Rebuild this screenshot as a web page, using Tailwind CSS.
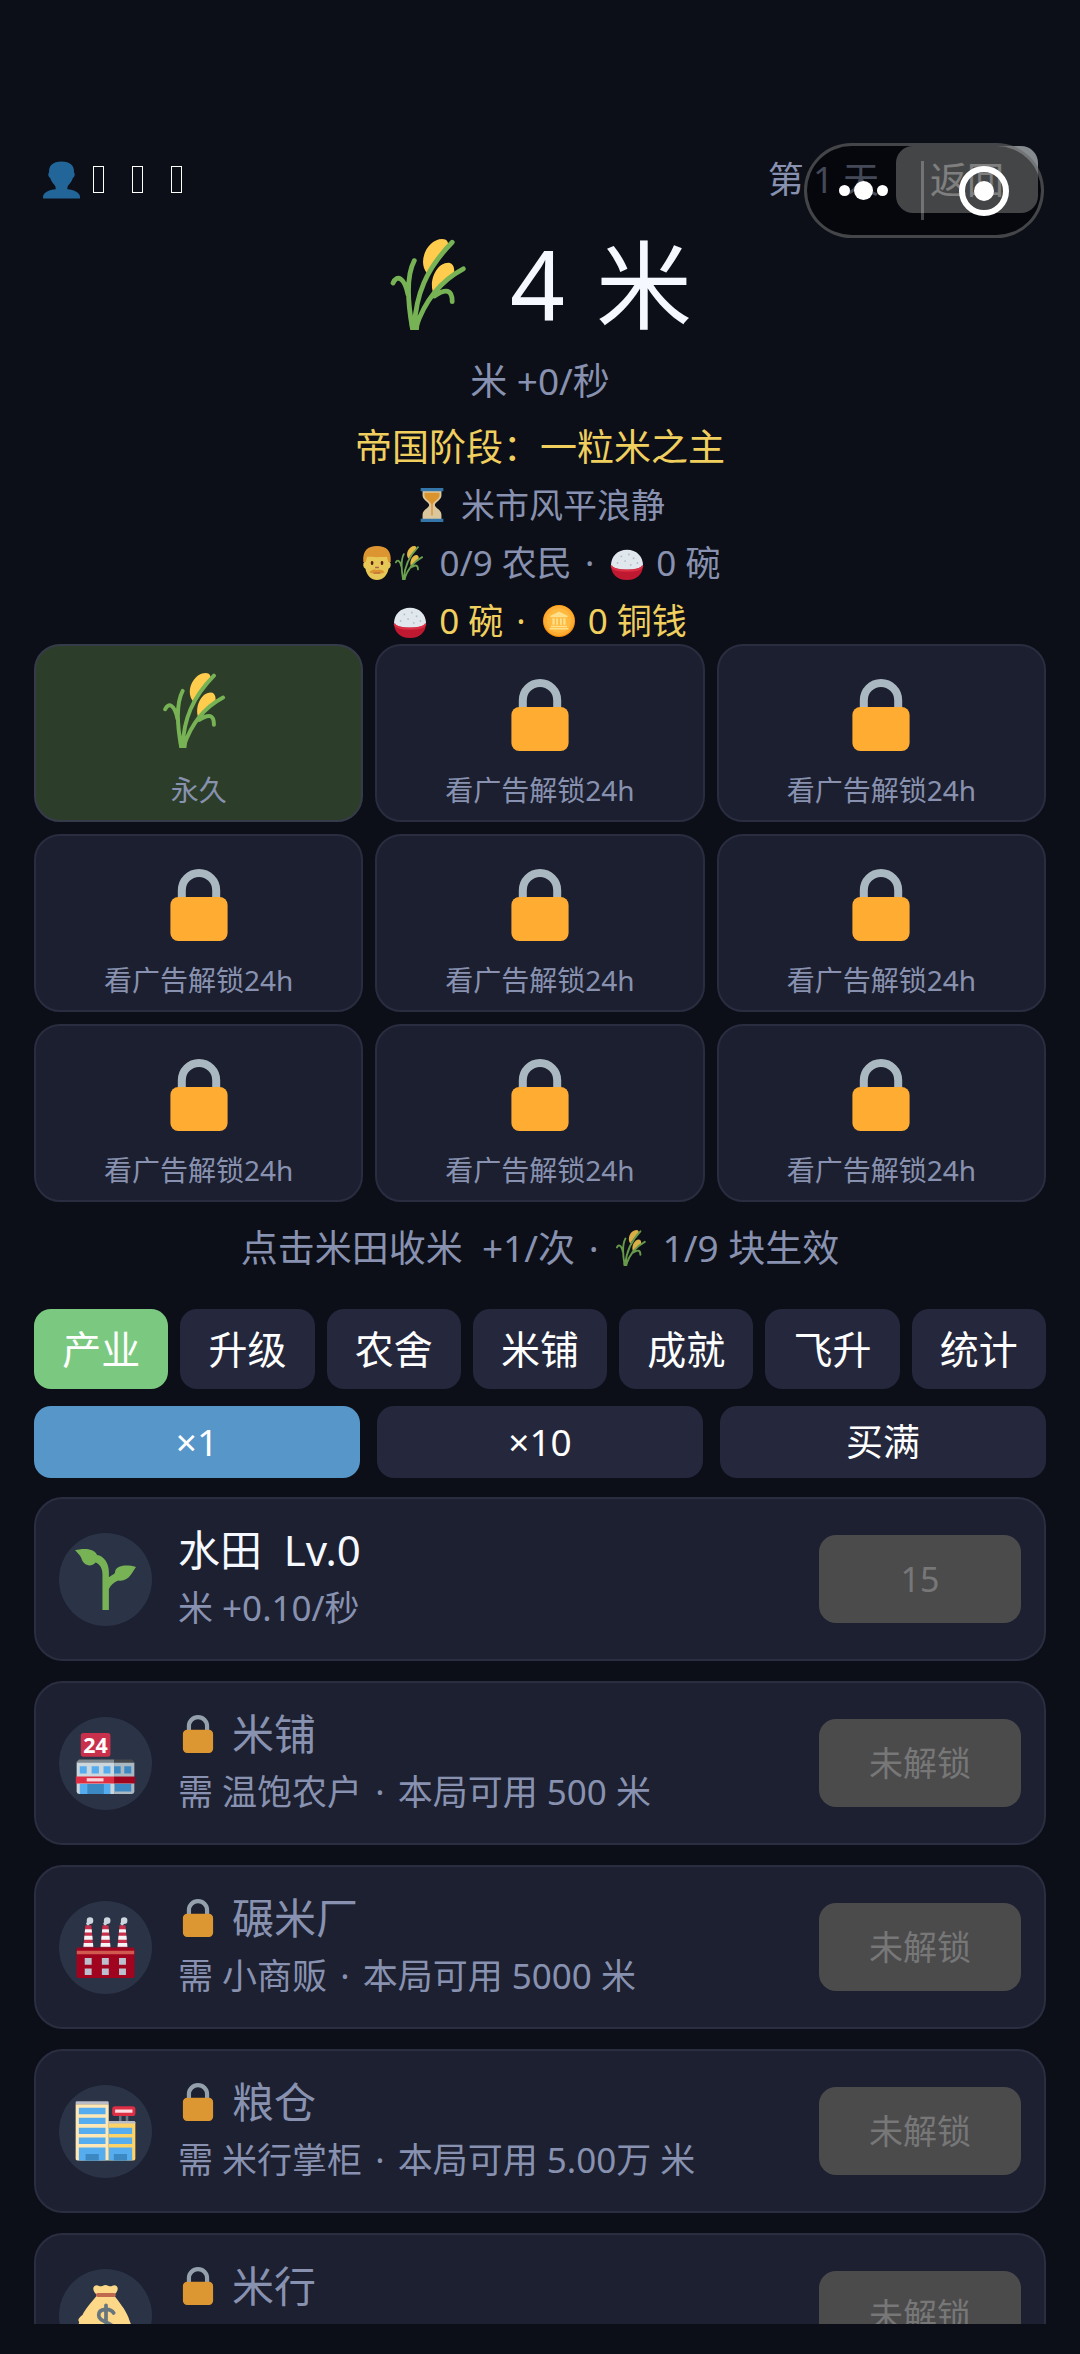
<!DOCTYPE html>
<html lang="zh-CN">
  <head>
    <meta charset="utf-8" />
    <meta name="viewport" content="width=device-width, initial-scale=1" />
    <title>一粒米之主</title>
    <script src="https://cdn.jsdelivr.net/npm/@tailwindcss/browser@4"></script>
  </head>
  <body class="flex h-screen flex-col overflow-hidden bg-[#0c0f18] px-[34px] pt-[146px] pb-[30px] font-['Noto_Sans','Noto_Sans_CJK_SC',sans-serif] text-[#8892b0]">
    <!-- icon set -->
    <svg class="hidden" aria-hidden="true">
      <symbol id="user" viewBox="0 0 36 36">
        <path fill="#226699" d="M24 26.800c0-2.200.4-3.200 1.400-4.300 2-2 3.300-4.300 3.900-6.600 1.500-.1 2.400-3.900 1-5C30.800 4.500 26.800.5 18.500.5S6.200 4.500 6.700 10.900c-1.400 1.100-.5 4.900 1 5 .6 2.300 1.900 4.600 3.900 6.600 1 1.100 1.400 2.100 1.400 4.300C6.500 27.400 1 30 1 34v1.500h35V34c0-4-5.500-6.600-12-7.200z"/>
      </symbol>
      <symbol id="wheat" viewBox="2 0 36 36">
        <path fill="#ffcc4d" d="M17.400 13.500C13.500 9 17.500 0 23.500 0c2 0 2.500 1.500 2.300 3C23 6 19.500 10 17.400 13.500zM20 21.500c-2-4.500 1-12.100 5.900-12.100 2.200.2 2.700 2.600 2 5C25 16.500 22.500 18.500 20 21.500z"/>
        <g fill="none" stroke="#77b255" stroke-width="1.9" stroke-linecap="round">
          <path d="M12.400 8.600C9 15 9.800 25 11.600 35M27.400 1.300C17 12 13 22 12.400 35M31.800 11.800C22 17 16 26 13 35M4 17.400C5.500 14 8.500 15 9.900 22M20.400 22.500C25 19.500 27.400 20 27.400 24.800"/>
        </g>
        <path fill="#77b255" d="M10.500 33h4l-.3 3h-3.400z"/>
      </symbol>
      <symbol id="lock" viewBox="0 0 36 36">
        <path fill="none" stroke="#aab8c2" stroke-width="4" d="M9.400 17v-6.400a8.600 8.600 0 0 1 17.200 0V17"/>
        <rect x="3.700" y="14" width="28.600" height="22" rx="4" fill="#ffac33"/>
      </symbol>
      <symbol id="hourglass" viewBox="0 0 36 36">
        <path fill="#ffe8b6" d="M8 3h20v5c0 5-7 7-7 10s7 5 7 10v5H8v-5c0-5 7-7 7-10S8 13 8 8z"/>
        <path fill="#ffac33" d="M10 5h16v3c0 4-7 6-7.300 10V29h-1.400V18C17 14 10 12 10 8z"/>
        <path fill="#3b88c3" d="M6 0h24v3.500H6zM6 32.500h24V36H6z"/>
      </symbol>
      <symbol id="man" viewBox="0 0 36 36">
        <path fill="#ffdc5d" d="M5 17c-2 0-2.300 6 .8 7C7 31 12 36 18 36s11-5 12.200-12c3.100-1 2.800-7 .8-7V9H5z"/>
        <path fill="#f4a435" d="M3.500 17C2.500 5 8 0 18 0s15.500 5 14.500 17h-2.500l-1.500-5.500c-6 .5-15 .5-21 0L6 17zM10 28c2-3.500 6-3.500 8-2.500 2-1 6-1 8 2.500-4 2-12 2-16 0z"/>
        <rect x="11.500" y="16" width="2.600" height="4" rx="1.300" fill="#662113"/>
        <rect x="22" y="16" width="2.600" height="4" rx="1.300" fill="#662113"/>
        <path fill="#c1694f" d="M16 22h4v1.500h-4zM14.500 28h7v1h-7z"/>
      </symbol>
      <symbol id="rice" viewBox="0 0 36 36">
        <path fill="#e1e8ed" d="M1 21C1 11 8 4 18 4s17 7 17 17z"/>
        <path fill="#be1931" d="M1 20c0 9 6 16 17 16s17-7 17-16z"/>
        <ellipse cx="18" cy="20.500" rx="16.500" ry="4.500" fill="#e1e8ed"/>
        <path fill="none" stroke="#dd2e44" stroke-width="2" d="M1.500 21C4 28 32 28 34.500 21"/>
        <g fill="#b4bec8"><circle cx="12" cy="11" r="1"/><circle cx="20" cy="9" r="1"/><circle cx="25" cy="13" r="1"/><circle cx="16" cy="16" r="1"/><circle cx="8" cy="18" r="1"/><circle cx="22" cy="20" r="1"/><circle cx="29" cy="18" r="1"/></g>
      </symbol>
      <symbol id="coin" viewBox="0 0 36 36">
        <circle cx="18" cy="18" r="17" fill="#f4900c"/>
        <circle cx="18" cy="17.500" r="16" fill="#ffac33"/>
        <circle cx="18" cy="17.500" r="13" fill="#ffb93e"/>
        <path fill="#ffe08a" d="M18 8l9 4.500V14H9v-1.500zM11 15h2.500v7H11zM15 15h2v7h-2zM19 15h2v7h-2zM22.500 15H25v7h-2.500zM9.500 23h17v1.500h-17zM8 25.500h20V27H8z"/>
      </symbol>
      <symbol id="sprout" viewBox="0 0 36 36">
        <path fill="#77b255" d="M0 .8C4-.3 11-.8 13 3.500c4 .5 7 5 7 10v3.200c1-1 2.500-1.300 3.600-2.500 0-5 7-5 12.400-3.600-2 2.400-4 9-10.500 8-2.500 1-4.500 2.700-5.500 5V36h-3.800V15c0-3.500-1.500-6-4-7C9 11.500 4.500 9 3.800 5.500 3 3.500 1 2 0 .8z"/>
      </symbol>
      <symbol id="shop" viewBox="0 0 36 37">
        <rect x="3" y="0" width="18" height="14.400" rx="1.600" fill="#c9304b"/>
        <text x="12" y="12" text-anchor="middle" font-size="13" font-weight="700" fill="#fff">24</text>
        <path fill="#808890" d="M.5 17.500 2 16h21.200v2.200H.5z"/>
        <path fill="#45484d" d="M23.200 16H34l1.500 1.500v.7H23.200z"/>
        <path fill="#ccd6dd" d="M.5 18h22.700v19H2a1.500 1.500 0 0 1-1.500-1.500z"/>
        <path fill="#aab8c2" d="M23.200 18h12.300v17.500A1.500 1.500 0 0 1 34 37H23.200z"/>
        <path fill="#55acee" d="M2.400 20.200h4.200v4.400H2.400zM9.600 20.200H14v4.400H9.600zM16.800 20.200H21v4.400h-4.200zM2.400 31H21v6H2.400z"/>
        <path fill="#3b88c3" d="M23.200 20.200h4v4.400h-4zM29.400 20.200h4.200v4.400h-4.200zM7 31h10v6H7zM23.600 31h10v4.500h-10z"/>
        <path fill="#dd2e44" d="M0 26.400h23.200v4.200H0z"/>
        <path fill="#a0041e" d="M23.200 26.400H36v4.200H23.200z"/>
        <rect x="6.600" y="27.400" width="10.200" height="2" fill="#f9d3d8"/>
      </symbol>
      <symbol id="factory" viewBox="0 -1 36 37">
        <g id="chimney">
          <path fill="#c9304b" d="M5.800 4h3.600l1.200 13.500h-6z"/>
          <path fill="#f4f4f6" d="M5.600 6.400h4l.2 2H5.400zM5.200 10.400H10l.2 2.400H5zM4.800 14.800h5.600l.2 2.200h-6z"/>
          <circle cx="8.600" cy="1.200" r="2" fill="#ccd6dd"/><circle cx="7.400" cy="3" r="1.100" fill="#ccd6dd"/>
        </g>
        <use href="#chimney" x="10.400"/>
        <use href="#chimney" x="20.700"/>
        <rect x=".4" y="17.500" width="35.200" height="18.500" rx="1" fill="#a0041e"/>
        <path fill="#d15a50" d="M.6 19.400h34.800v2.200H.6z"/>
        <path fill="#bcc0ce" d="M5.400 23.800h4.200V28H5.400zM15.800 23.800H20V28h-4.200zM26.200 23.800h4.200V28h-4.200zM5.400 30.200h4.200v4H5.400zM15.800 30.200H20v4h-4.200zM26.200 30.200h4.200v4h-4.200z"/>
      </symbol>
      <symbol id="store" viewBox="-1 -1 38 38">
        <path fill="#66757f" d="M26.400 8H28v4h-1.600zM30.600 8h1.600v4h-1.600z"/>
        <rect x="22.200" y="2.200" width="14.400" height="6.200" rx="1.800" fill="#dd2e44"/>
        <path fill="#fbdde1" d="M24 4.300h10.800v2H24z"/>
        <path fill="#ffd266" d="M20 11.400h15.600a1 1 0 0 1 1 1V35a1 1 0 0 1-1 1H20z"/>
        <path fill="#b9bcc6" d="M20 11.400h15.600a1 1 0 0 1 1 1v.6H20zM-.6 1V0A.8.800 0 0 1 .2-.8h19a.8.800 0 0 1 .8.800v1z"/>
        <path fill="#ffe8b6" d="M-.6 1H20v35H.4a1 1 0 0 1-1-1z"/>
        <path fill="#55acee" d="M1.400 3.200H18v4H1.400zM1.400 9.400H18v4H1.400zM1.400 15.600H18v4H1.400zM1.400 21.800H18v4H1.400zM1.400 28H18v8H1.400zM20.200 15.600h14.400v4H20.200zM20.200 21.800h14.400v4H20.200zM20.200 28h14.400v8H20.200z"/>
        <path fill="#3b88c3" d="M5.600 32h8.200v4H5.600zM23.200 32h8.200v4h-8.200z"/>
      </symbol>
      <symbol id="bag" viewBox="0 0 36 36">
        <path fill="#fdd888" d="M13 6C11 4 10 2 11.500.6 13-.5 14 .8 15 .8S17 0 18 0s2 .8 3 .8 2-1.300 3.500-.2C26 2 25 4 23 6c3 4 6.500 8 8.500 13C33 24 36 28 34 32c-2 4-6 4-16 4S4 36 2 32c-1.500-4-.5-7 .5-10C1 20 3 19 4.500 17.500 6 14 10 10 13 6z"/>
        <rect x="12.400" y="4.700" width="11.600" height="2.400" rx="1" fill="#c1694f"/>
        <path fill="none" stroke="#67757f" stroke-width="2.200" stroke-linecap="round" d="M18.300 12v20M22.800 16.500C21 13.500 14 13.500 14 17.800c0 4.700 9 3.700 9 8.700 0 4-7.500 4.200-9.500.7"/>
      </symbol>
    </svg>

    <header class="flex h-[67px] shrink-0 items-center justify-between px-2 text-[36px]">
      <div class="flex items-center">
        <svg class="size-[38px]"><use href="#user" /></svg>
        <!-- nickname characters the font has no glyph for -->
        <span class="ml-[13px] flex gap-7">
          <i class="h-[27px] w-[11px] border border-white"></i>
          <i class="h-[27px] w-[11px] border border-white"></i>
          <i class="h-[27px] w-[11px] border border-white"></i>
        </span>
      </div>
      <div class="flex items-center gap-[17px]">
        <span>第 1 天</span>
        <button class="h-[67px] w-[142px] rounded-[17px] bg-[#868b8f] text-[37px] text-white">返回</button>
      </div>
    </header>

    <!-- host app capsule, floats over the page -->
    <div class="absolute top-[143px] right-9 flex h-[95px] w-60 items-center rounded-full border-3 border-white/25 bg-black/50">
      <button class="flex flex-1 items-center justify-center gap-1" aria-label="更多">
        <i class="size-[11px] rounded-full bg-white"></i>
        <i class="size-[19px] rounded-full bg-white"></i>
        <i class="size-[11px] rounded-full bg-white"></i>
      </button>
      <i class="h-[59px] w-[3px] bg-white/25"></i>
      <button class="flex flex-1 items-center justify-center pl-1" aria-label="关闭">
        <i class="flex size-[50px] items-center justify-center rounded-full border-6 border-white">
          <i class="size-[20px] rounded-full bg-white"></i>
        </i>
      </button>
    </div>

    <section class="shrink-0 text-center text-[35px] leading-[46px]">
      <h1 class="flex h-[138px] items-center justify-center gap-[31px] pt-1 text-[96px] leading-[136px] text-[#f5f8ff]">
        <svg class="size-[91px]"><use href="#wheat" /></svg>
        <span>4</span>
        <span>米</span>
      </h1>
      <p class="mt-[7px] text-[37px]">米 +0/秒</p>
      <p class="mt-5 text-[37px] text-[#f0cf5f]">帝国阶段：一粒米之主</p>
      <p class="mt-3 flex items-center justify-center gap-3 text-[34px]"><svg class="size-[34px] opacity-85"><use href="#hourglass" /></svg>米市风平浪静</p>
      <p class="mt-3 flex items-center justify-center gap-3">
        <span class="flex opacity-90"><svg class="size-[34px]"><use href="#man" /></svg><svg class="size-[34px]"><use href="#wheat" /></svg></span>
        <span>0/9 农民 <span class="px-1">·</span></span>
        <svg class="size-[34px]"><use href="#rice" /></svg>
        <span>0 碗</span>
      </p>
      <p class="mt-3 flex items-center justify-center gap-3 text-[#f0cf5f]">
        <svg class="size-[34px]"><use href="#rice" /></svg>
        <span>0 碗 <span class="px-1">·</span></span>
        <svg class="size-[34px]"><use href="#coin" /></svg>
        <span>0 铜钱</span>
      </p>
    </section>

    <div id="fields" class="grid shrink-0 grid-cols-3 gap-3 text-[28px]"></div>

    <p class="mt-[23px] flex shrink-0 items-center justify-center gap-3 text-[37px] leading-[46px]">
      <span>点击米田收米&nbsp; +1/次 <span class="px-1">·</span></span>
      <svg class="size-[36px] opacity-85"><use href="#wheat" /></svg>
      <span>1/9 块生效</span>
    </p>

    <nav class="mt-[38px] grid shrink-0 grid-cols-7 gap-3 text-[39px] text-white">
      <button class="h-20 rounded-[17px] bg-[#7bc980]">产业</button>
      <button class="h-20 rounded-[17px] bg-[#25283c]">升级</button>
      <button class="h-20 rounded-[17px] bg-[#25283c]">农舍</button>
      <button class="h-20 rounded-[17px] bg-[#25283c]">米铺</button>
      <button class="h-20 rounded-[17px] bg-[#25283c]">成就</button>
      <button class="h-20 rounded-[17px] bg-[#25283c]">飞升</button>
      <button class="h-20 rounded-[17px] bg-[#25283c]">统计</button>
    </nav>

    <div class="mt-[17px] grid shrink-0 grid-cols-3 gap-[17px] text-[37px] text-white">
      <button class="h-[72px] rounded-[17px] bg-[#5796c9]">×1</button>
      <button class="h-[72px] rounded-[17px] bg-[#25283c]">×10</button>
      <button class="h-[72px] rounded-[17px] bg-[#25283c]">买满</button>
    </div>

    <main id="industries" class="mt-[19px] flex min-h-0 flex-1 flex-col gap-5 overflow-hidden"></main>

    <script>
      const fields = document.getElementById("fields");
      for (let i = 0; i < 9; i++) {
        fields.innerHTML += i === 0
          ? `<button class="flex h-[178px] flex-col items-center rounded-[26px] border-2 border-[#363b4a] bg-[#2c3e29] pt-[27px]">
               <svg class="size-[75px]"><use href="#wheat" /></svg>
               <span class="mt-[22px] leading-10">永久</span>
             </button>`
          : `<button class="flex h-[178px] flex-col items-center rounded-[26px] border-2 border-[#2a2d40] bg-[#1c1f2f] pt-[33px]">
               <svg class="size-[72px]"><use href="#lock" /></svg>
               <span class="mt-[19px] leading-10">看广告解锁24h</span>
             </button>`;
      }

      const industries = [
        { icon: "sprout", name: "水田&nbsp; Lv.0", note: "米 +0.10/秒", action: "15", open: true },
        { icon: "shop", name: "米铺", note: "需 温饱农户 <span class='px-1'>·</span> 本局可用 500 米", action: "未解锁" },
        { icon: "factory", name: "碾米厂", note: "需 小商贩 <span class='px-1'>·</span> 本局可用 5000 米", action: "未解锁" },
        { icon: "store", name: "粮仓", note: "需 米行掌柜 <span class='px-1'>·</span> 本局可用 5.00万 米", action: "未解锁" },
        { icon: "bag", name: "米行", note: "", action: "未解锁" }
      ];
      document.getElementById("industries").innerHTML = industries.map(item => `
        <article class="flex h-[164px] shrink-0 items-center rounded-[29px] border-2 border-[#2a2e40] bg-[#1c2030] px-[23px]">
          <div class="flex size-[93px] items-center justify-center rounded-full bg-[#2b3347]">
            <svg class="size-[61px]"><use href="#${item.icon}" /></svg>
          </div>
          <div class="ml-[26px] flex-1">
            <h2 class="flex h-[58px] items-center text-[42px] leading-[58px] ${item.open ? "text-[#f5f8ff]" : ""}">
              ${item.open ? "" : `<svg class="mr-[15px] ml-px size-[38px] opacity-85"><use href="#lock" /></svg>`}${item.name}
            </h2>
            <p class="h-[58px] text-[35px] leading-[58px]">${item.note}</p>
          </div>
          <button disabled class="h-[88px] w-[202px] rounded-[17px] bg-[#4b4b4c] text-[34px] text-[#777778]">${item.action}</button>
        </article>`).join("");
    </script>
  </body>
</html>
